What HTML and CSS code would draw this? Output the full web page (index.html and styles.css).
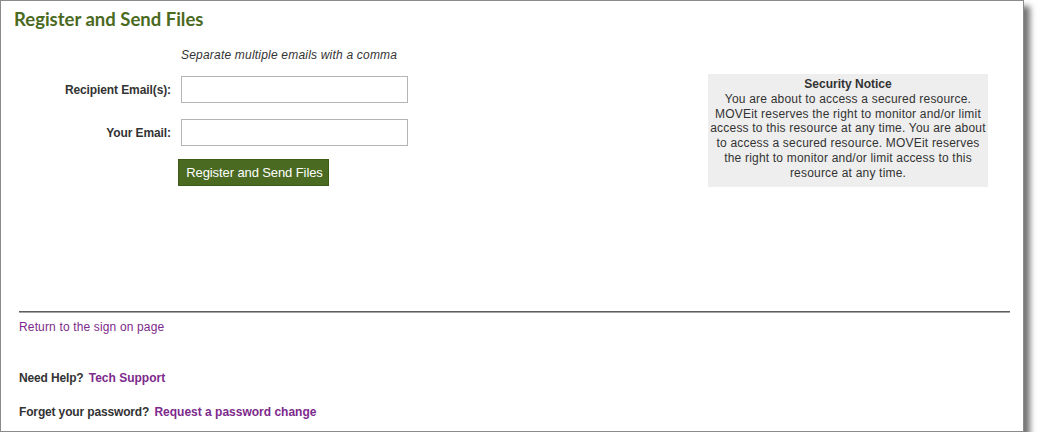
FILE: index.html
```html
<!DOCTYPE html>
<html lang="en">
<head>
    <meta charset="UTF-8">
    <title>Register and Send Files</title>
    <link rel="stylesheet" href="styles.css">
</head>
<body>
    <!-- Main framed panel -->
    <div class="panel">
        <h1 class="page-title">Register and Send Files</h1>

        <div class="content">
            <!-- Registration form -->
            <form class="register-form">
                <div class="hint">Separate multiple emails with a comma</div>

                <label class="field-label" for="recipients">Recipient Email(s):</label>
                <input class="field-input" type="text" id="recipients">

                <label class="field-label" for="own-email">Your Email:</label>
                <input class="field-input" type="text" id="own-email">

                <div class="button-cell">
                    <button type="button" class="submit-button">Register and Send Files</button>
                </div>
            </form>

            <!-- Security notice box -->
            <div class="notice">
                <div class="notice-title">Security Notice</div>
                You are about to access a secured resource. MOVEit reserves the right to monitor and/or limit access to this resource at any time. You are about to access a secured resource. MOVEit reserves the right to monitor and/or limit access to this resource at any time.
            </div>
        </div>

        <hr class="divider">

        <!-- Footer links -->
        <div class="footer">
            <a class="plain-link" href="#">Return to the sign on page</a>
            <div class="help-line">Need Help? <a class="bold-link" href="#">Tech Support</a></div>
            <div class="help-line password-line">Forget your password? <a class="bold-link" href="#">Request a password change</a></div>
        </div>
    </div>
</body>
</html>
```

FILE: styles.css
```css
/* General body styling */
body {
    margin: 0;
    font-family: 'Liberation Sans', Arial, sans-serif;
    font-size: 12px;
    color: #333333;
    background-color: #ffffff;
}

/* Framed panel with drop shadow */
.panel {
    width: 1022px;
    height: 430px;
    border: 1px solid #8a8a8a;
    background-color: #ffffff;
    box-shadow: 6px 6px 6px rgba(0, 0, 0, 0.55);
}

.page-title {
    margin: 0;
    padding: 8px 13px 0;
    height: 20px;
    line-height: 20px;
    font-family: 'Lato', 'DejaVu Sans', sans-serif;
    font-size: 18.5px;
    font-weight: bold;
    color: #4a6a1e;
}

/* Form + notice row */
.content {
    display: flex;
    justify-content: space-between;
    height: 263px;
    padding: 19px 35px 0 0;
}

.register-form {
    display: grid;
    grid-template-columns: 170px 227px;
    column-gap: 10px;
    align-items: center;
    align-content: start;
}

.hint {
    grid-column: 2;
    font-style: italic;
    letter-spacing: 0.2px;
    line-height: 15px;
    margin-bottom: 13px;
}

.field-label {
    margin-bottom: 16px;
    text-align: right;
    font-weight: bold;
    letter-spacing: -0.1px;
}

.field-input {
    box-sizing: border-box;
    width: 227px;
    height: 27px;
    margin: 0 0 16px;
    border: 1px solid #b5b5b5;
    padding: 2px 4px;
    font-family: inherit;
    font-size: 12px;
}

.button-cell {
    grid-column: 2;
    margin-top: -3px;
}

.submit-button {
    box-sizing: border-box;
    width: 151px;
    height: 27px;
    margin-left: -3px;
    padding: 0 4px 0 6px;
    border: 1px solid #3d5a18;
    background-color: #4a6a22;
    color: #ffffff;
    font-family: inherit;
    font-size: 13px;
    letter-spacing: -0.1px;
    cursor: pointer;
}

/* Grey security notice */
.notice {
    box-sizing: border-box;
    width: 280px;
    height: 113px;
    margin-top: 26px;
    padding: 3px 2px 0;
    background-color: #eeeeee;
    text-align: center;
    line-height: 14.8px;
    letter-spacing: 0.2px;
}

.notice-title {
    font-weight: bold;
    letter-spacing: 0;
}

.divider {
    height: 0;
    margin: 0 13px 0 18px;
    border: 0;
    border-top: 1px solid #5e5e5e;
    border-bottom: 1px solid #a5a5a5;
}

/* Footer links */
.footer {
    padding: 7px 0 0 18px;
    line-height: 15px;
}

.plain-link {
    color: #7d2a8c;
    text-decoration: none;
    letter-spacing: 0.15px;
}

.help-line {
    margin-top: 36px;
    font-weight: bold;
    letter-spacing: -0.15px;
}

.password-line {
    margin-top: 19px;
}

.bold-link {
    margin-left: 2px;
    color: #7d2a8c;
    text-decoration: none;
    letter-spacing: 0;
}
```
